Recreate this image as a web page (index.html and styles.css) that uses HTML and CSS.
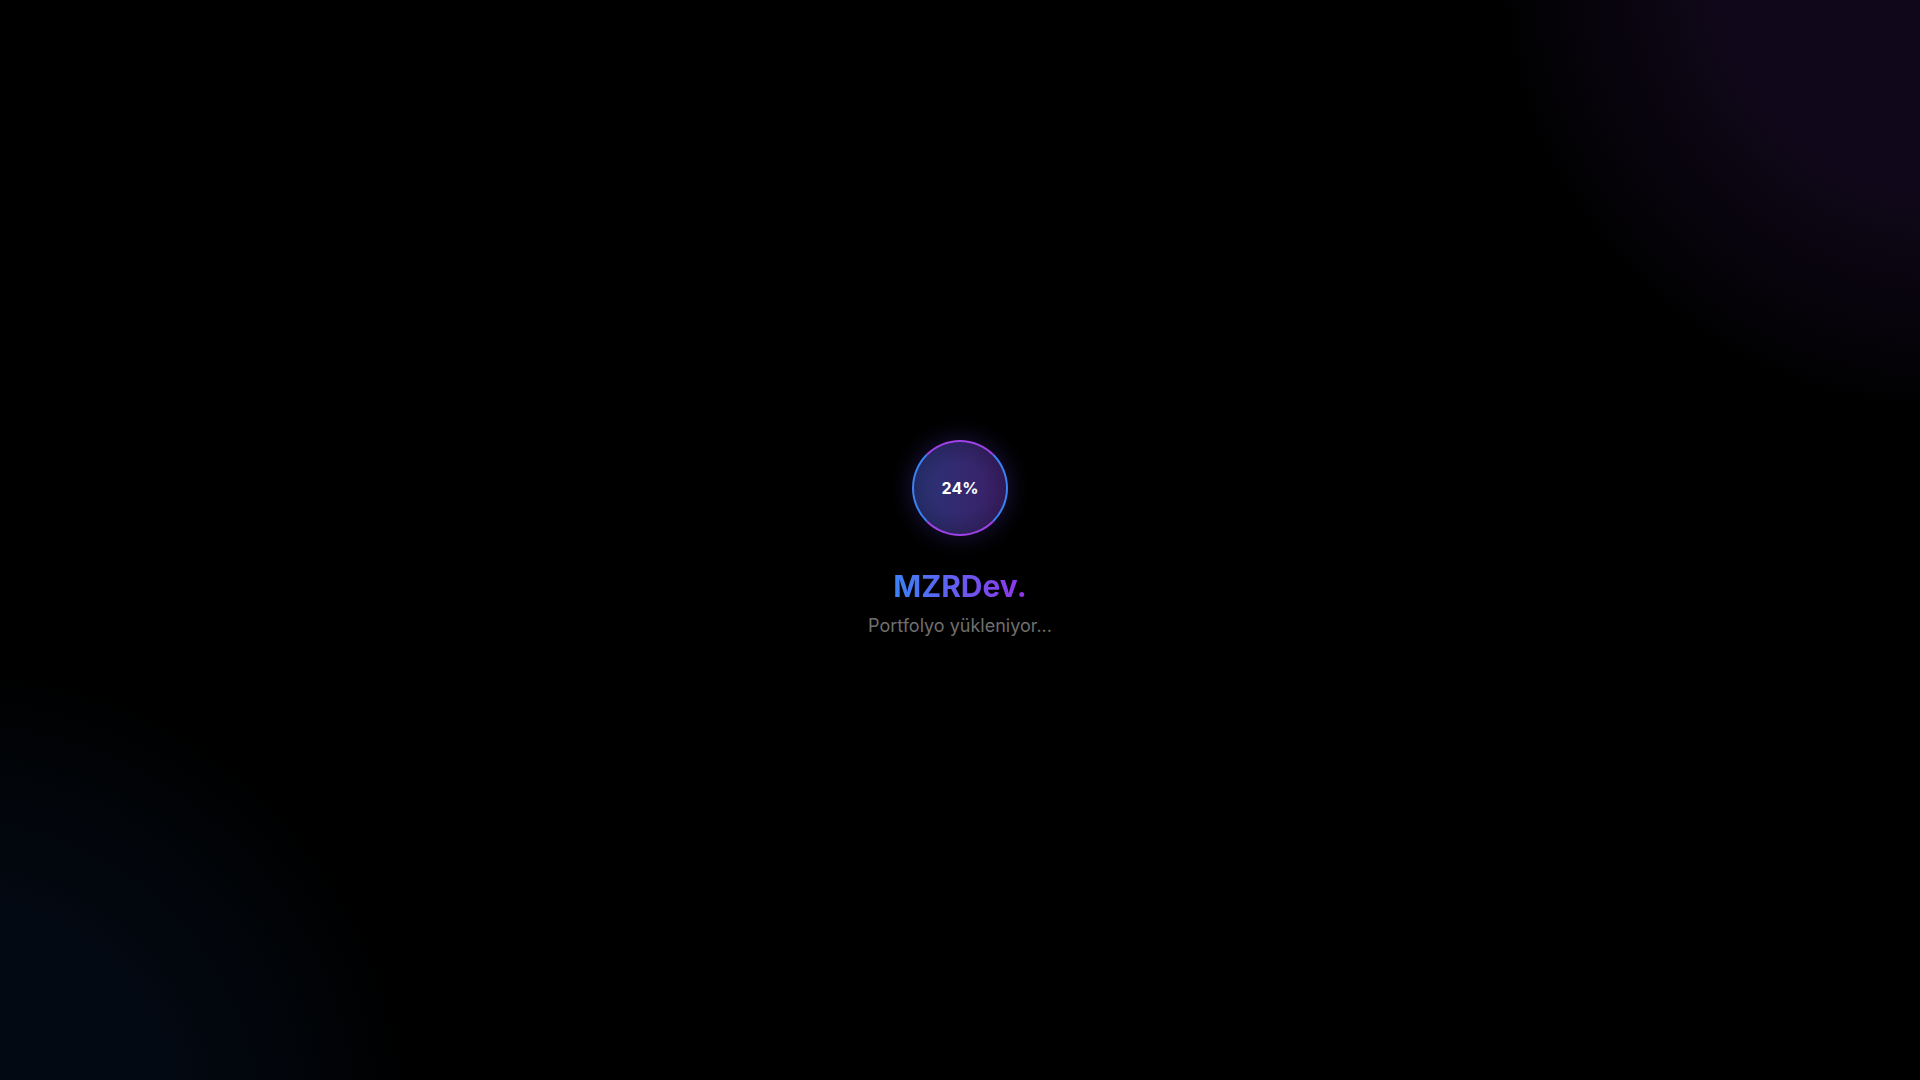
FILE: index.html
```html
<!DOCTYPE html>
<html lang="tr">
<head>
<meta charset="utf-8">
<title>MZRDev.</title>
<link rel="stylesheet" href="styles.css">
</head>
<body>
<main class="loader">
  <div class="ring">
    <span class="percent">24%</span>
  </div>
  <h1 class="brand">MZRDev.</h1>
  <p class="status">Portfolyo yükleniyor...</p>
</main>
</body>
</html>
```

FILE: styles.css
```css
html, body {
  margin: 0;
  padding: 0;
  height: 100%;
}

body {
  background-color: #000;
  background-image:
    radial-gradient(circle 460px at 1950px -40px, rgba(16, 8, 26, 1) 0%, rgba(16, 8, 26, 1) 50%, rgba(16, 8, 26, 0.55) 72%, rgba(16, 8, 26, 0) 100%),
    radial-gradient(circle 470px at -50px 1130px, rgba(3, 9, 18, 1) 0%, rgba(3, 9, 18, 1) 50%, rgba(3, 9, 18, 0.55) 72%, rgba(3, 9, 18, 0) 100%);
  background-repeat: no-repeat;
  font-family: Inter, "Liberation Sans", sans-serif;
  overflow: hidden;
}

.loader {
  height: 100vh;
  display: flex;
  flex-direction: column;
  align-items: center;
  justify-content: center;
}

.ring {
  width: 96px;
  height: 96px;
  box-sizing: border-box;
  border-radius: 50%;
  border: 2px solid;
  border-color: #a042e8 #3b82f6 #a042e8 #3b82f6;
  background:
    radial-gradient(circle at 50% 50%, rgba(0, 0, 0, 0) 40%, rgba(0, 0, 0, 0.35) 100%),
    linear-gradient(to right, #2b3478, #3b1e66);
  box-shadow: 0 0 24px rgba(88, 60, 200, 0.35);
  display: flex;
  align-items: center;
  justify-content: center;
}

.percent {
  color: #fff;
  font-size: 16px;
  font-weight: 700;
  line-height: 24px;
}

.brand {
  margin: 32px 0 0;
  font-size: 30px;
  line-height: 36px;
  font-weight: 700;
  background: linear-gradient(to right, #3b82f6, #9333ea);
  -webkit-background-clip: text;
  background-clip: text;
  color: transparent;
}

.status {
  margin: 8px 0 0;
  font-size: 18px;
  line-height: 28px;
  color: #6f6f6f;
}
```
